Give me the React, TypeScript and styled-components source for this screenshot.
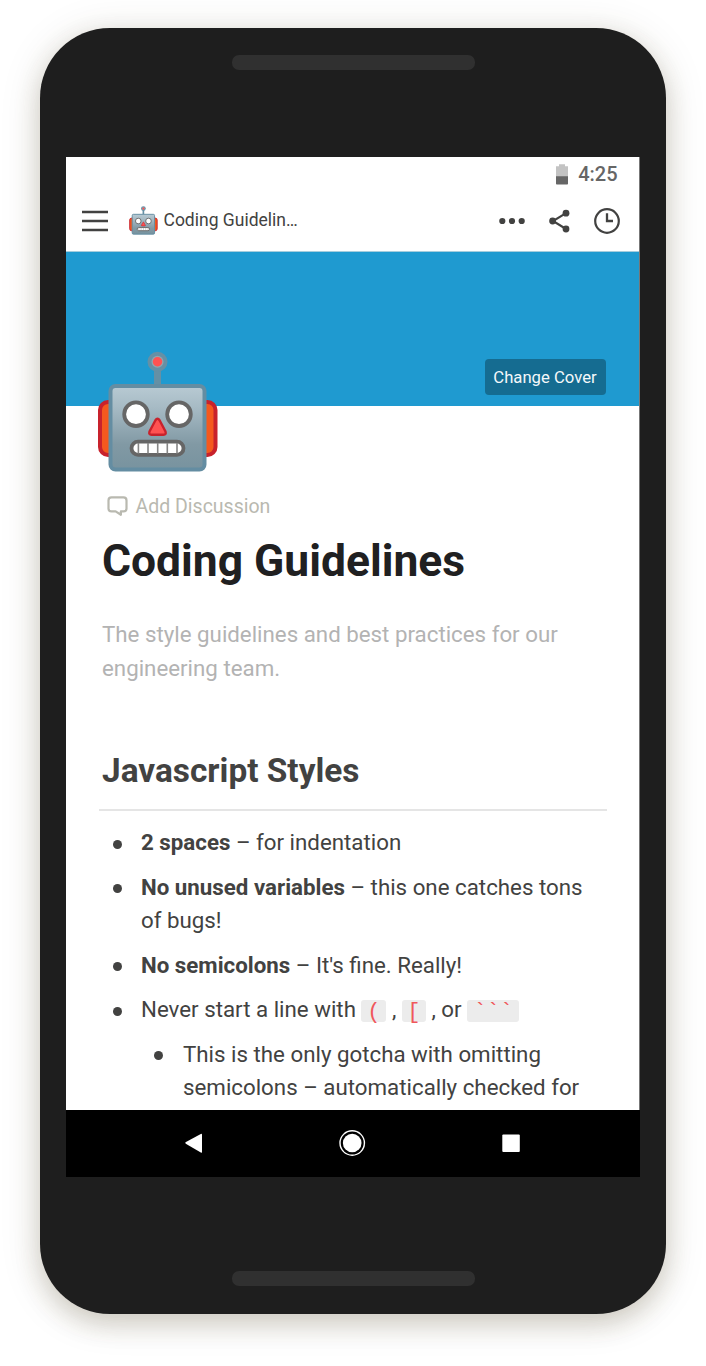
import React from 'react';
import styled, { createGlobalStyle } from 'styled-components';

const GlobalStyle = createGlobalStyle`
  * { box-sizing: border-box; }
  body {
    margin: 0;
    background: #fff;
    font-family: Roboto, "Liberation Sans", sans-serif;
    color: #424241;
  }
  svg { display: block; flex: none; }
`;

const Stage = styled.main`
  height: 1366px;
  padding: 28px 40px 0;
  overflow: hidden;
`;

const Phone = styled.div`
  width: 626px;
  height: 1286px;
  padding: 27px 26px 0;
  border-radius: 70px;
  background: #1e1e1e;
  box-shadow: 0 10px 26px rgba(70, 55, 20, 0.2), 0 4px 42px rgba(70, 60, 30, 0.13);
`;

const Speaker = styled.div`
  width: 243px;
  height: 15px;
  margin-left: 166.4px;
  border-radius: 7px;
  background: #303030;
`;

const Screen = styled.div`
  display: flex;
  flex-direction: column;
  width: 574px;
  height: 1020px;
  margin: 87px 0 94px;
`;

const Surface = styled.div`
  display: flex;
  flex: 1;
  flex-direction: column;
  min-height: 0;
  border-right: 1px solid #777;
  background: #fff;
`;

const StatusBar = styled.div`
  display: flex;
  flex: none;
  align-items: center;
  justify-content: flex-end;
  gap: 10.5px;
  height: 35px;
  padding-right: 21.5px;
`;

const Clock = styled.span`
  color: #666;
  font-size: 20px;
  font-weight: 500;
  line-height: 37px;
`;

const Toolbar = styled.header`
  display: flex;
  flex: none;
  align-items: center;
  height: 59px;
  padding: 0 19px 1px 16px;
`;

const PageName = styled.div`
  display: flex;
  align-items: center;
  gap: 5.5px;
  margin-left: 21px;
  font-size: 17.5px;
  line-height: 58px;
  svg { margin-top: -2px; }
  span { margin-top: -3px; }
`;

const Actions = styled.div`
  display: flex;
  align-items: center;
  gap: 24px;
  margin-left: auto;
`;

const Cover = styled.div`
  display: flex;
  flex: none;
  align-items: flex-end;
  justify-content: flex-end;
  height: 155px;
  padding: 0 33px 11px 0;
  border-top: 1px solid #a6cddd;
  background: #1f9ad0;
`;

const CoverButton = styled.button`
  width: 121px;
  height: 36px;
  padding: 1px 1px 0 0;
  border: 0;
  border-radius: 4px;
  background: #156c91;
  color: #f4f8fa;
  font: 400 16.7px/35px Roboto, sans-serif;
`;

const Article = styled.article`
  padding: 0 32px 0 36px;
`;

const PageIcon = styled.div`
  position: relative;
  width: 122px;
  height: 122px;
  margin: -55px 0 0 -5px;
`;

const Discussion = styled.div`
  display: flex;
  align-items: center;
  gap: 7.5px;
  height: 30px;
  margin: 18px 0 0 5px;
  color: #b9b9b0;
  font-size: 19.5px;
  line-height: 31px;
`;

const Title = styled.h1`
  margin: 11px 0 0;
  color: #202021;
  font-size: 44.4px;
  font-weight: 700;
  line-height: 58px;
`;

const Intro = styled.p`
  margin: 28px 0 0;
  color: #b3b3b3;
  font-size: 22.3px;
  line-height: 33.5px;
`;

const Heading = styled.h2`
  margin: 62px 0 0 -3px;
  padding: 0 0 14px 3px;
  width: 508px;
  border-bottom: 2px solid #e5e5e5;
  font-size: 33.4px;
  font-weight: 700;
  line-height: 48px;
`;

const List = styled.ul<{ $nested?: boolean }>`
  display: flex;
  flex-direction: column;
  gap: 11.1px;
  margin: ${p => (p.$nested ? '11px 0 0' : '15px 0 0')};
  padding: 0;
  list-style: none;
`;

const Item = styled.li<{ $nested?: boolean }>`
  display: flex;
  font-size: 22.3px;
  line-height: 33.5px;
  &::before {
    content: '';
    flex: none;
    width: 9px;
    height: 9px;
    margin: 13.5px ${p => (p.$nested ? 20 : 19.5)}px 0 ${p => (p.$nested ? 13 : 10.5)}px;
    border-radius: 50%;
    background: #424241;
  }
`;

const ItemBody = styled.div`
  white-space: nowrap;
`;

const Code = styled.code<{ $width: number }>`
  display: inline-block;
  width: ${p => p.$width}px;
  height: 22px;
  border-radius: 3px;
  background: #ececec;
  color: #f0575b;
  font: 400 22px/25px "Liberation Mono", monospace;
  text-align: center;
  vertical-align: top;
  margin-top: 7px;
`;

const NavBar = styled.nav`
  display: flex;
  flex: none;
  align-items: center;
  width: 573.5px;
  height: 67px;
  padding: 0 0 1px 119px;
  background: #000;
`;

const Viewport = styled.section`
  flex: 1;
  min-height: 0;
  overflow: hidden;
`;

function Robot({ size, id }: { size: number; id: string }) {
  return (
    <svg width={size} height={size} viewBox="0 0 122 122">
      <defs>
        <linearGradient id={id} x1="0" y1="0" x2="0" y2="1">
          <stop offset="0" stopColor="#b8cad3" />
          <stop offset="0.25" stopColor="#a7bbc5" />
          <stop offset="0.7" stopColor="#8199a4" />
          <stop offset="1" stopColor="#78939f" />
        </linearGradient>
      </defs>
      <rect x="57" y="14" width="7" height="22" fill="#6590a5" />
      <circle cx="60.5" cy="10.8" r="10" fill="#6590a5" />
      <circle cx="60.5" cy="10.8" r="6" fill="#90a4ae" />
      <circle cx="60.5" cy="10.8" r="4.7" fill="#ff5252" />
      <rect x="3" y="51" width="24" height="53" rx="8" fill="#f4591e" stroke="#c8222c" strokeWidth="4" />
      <rect x="94.5" y="51" width="24" height="53" rx="8" fill="#f4591e" stroke="#c8222c" strokeWidth="4" />
      <rect x="13.5" y="35" width="94" height="83.5" rx="5" fill={`url(#${id})`} stroke="#648da2" strokeWidth="4" />
      <circle cx="39" cy="63.2" r="11.8" fill="#fff" stroke="#666" strokeWidth="3.8" />
      <circle cx="82" cy="63.2" r="11.8" fill="#fff" stroke="#666" strokeWidth="3.8" />
      <path d="M58.3 69.5Q60.5 66 62.7 69.5L68.5 80.5Q69.5 83.8 66.5 83.8H54.5Q51.5 83.8 52.5 80.5Z" fill="#ff5252" stroke="#c8222c" strokeWidth="2.4" strokeLinejoin="round" />
      <rect x="34.5" y="90.7" width="52" height="13.2" rx="6.6" fill="#fff" stroke="#666" strokeWidth="3.8" />
      <path d="M41.4 92v10.5M51 92v10.5M60.7 92v10.5M70.3 92v10.5M80 92v10.5" stroke="#858585" strokeWidth="1.6" />
    </svg>
  );
}

const BatteryIcon = () => (
  <svg width="12" height="21" viewBox="0 0 12 21">
    <path d="M0 2.2h3V.2h6v2h3V13H0z" fill="#c3c3c3" />
    <path d="M0 12.2h12v7.5q0 .8-.8.8H.8Q0 20.5 0 19.7z" fill="#666" />
  </svg>
);

const MenuIcon = () => (
  <svg width="26" height="24" viewBox="0 0 26 24">
    <path d="M0 3h26M0 12h26M0 21h26" stroke="#424241" strokeWidth="2.4" />
  </svg>
);

const MoreIcon = () => (
  <svg width="26" height="8" viewBox="0 0 26 8">
    <g fill="#424241">
      <circle cx="3.3" cy="4" r="3.1" />
      <circle cx="13" cy="4" r="3.1" />
      <circle cx="22.7" cy="4" r="3.1" />
    </g>
  </svg>
);

const ShareIcon = () => (
  <svg width="21" height="24" viewBox="0 0 21 24">
    <path d="M17 4.2 4 12l13 8" fill="none" stroke="#424241" strokeWidth="2.1" />
    <g fill="#424241">
      <circle cx="17" cy="4.2" r="3.4" />
      <circle cx="3.6" cy="12" r="3.4" />
      <circle cx="17" cy="20" r="3.4" />
    </g>
  </svg>
);

const HistoryIcon = () => (
  <svg width="26" height="26" viewBox="0 0 26 26">
    <circle cx="13" cy="13" r="11.8" fill="none" stroke="#424241" strokeWidth="2.2" />
    <path d="M13 5.3V13h6" fill="none" stroke="#424241" strokeWidth="2.3" />
  </svg>
);

const CommentIcon = () => (
  <svg width="21" height="20" viewBox="0 0 21 20">
    <path d="M4.5 1.4h12q3 0 3 3v8q0 3-3 3h-2.6v3.4L8.6 15.4H4.5q-3 0-3-3v-8q0-3 3-3z" fill="none" stroke="#b9b9b0" strokeWidth="2.2" strokeLinejoin="round" />
  </svg>
);

const NavIcons = () => (
  <svg width="340" height="30" viewBox="0 0 340 30" fill="#fff">
    <path d="M.5 14.2Q0 15 .8 15.7L15.8 24.6Q17 25.2 17 24V6.8Q17 5.4 15.8 6z" />
    <circle cx="167.2" cy="15" r="12.9" />
    <circle cx="167.2" cy="15" r="11.5" fill="#000" />
    <circle cx="167.2" cy="15" r="9.3" />
    <rect x="317.3" y="6.5" width="17.5" height="17.6" rx="1" />
  </svg>
);

export default function App() {
  return (
    <Stage>
      <GlobalStyle />
      <Phone>
        <Speaker />
        <Screen>
          <Surface>
            <StatusBar>
              <BatteryIcon />
              <Clock>4:25</Clock>
            </StatusBar>
            <Toolbar>
              <MenuIcon />
              <PageName>
                <Robot size={29} id="robot-small" />
                <span>Coding Guidelin…</span>
              </PageName>
              <Actions>
                <MoreIcon />
                <ShareIcon />
                <HistoryIcon />
              </Actions>
            </Toolbar>
            <Viewport>
              <Cover>
                <CoverButton>Change Cover</CoverButton>
              </Cover>
              <Article>
                <PageIcon>
                  <Robot size={122} id="robot-large" />
                </PageIcon>
                <Discussion>
                  <CommentIcon />
                  <span>Add Discussion</span>
                </Discussion>
                <Title>Coding Guidelines</Title>
                <Intro>The style guidelines and best practices for our<br />engineering team.</Intro>
                <Heading>Javascript Styles</Heading>
                <List>
                  <Item><ItemBody><b>2 spaces</b> – for indentation</ItemBody></Item>
                  <Item><ItemBody><b>No unused variables</b> – this one catches tons<br />of bugs!</ItemBody></Item>
                  <Item><ItemBody><b>No semicolons</b> – It's fine. Really!</ItemBody></Item>
                  <Item>
                    <ItemBody>
                      Never start a line with <Code $width={25}>(</Code> , <Code $width={24}>[</Code> , or <Code $width={52}>```</Code>
                      <List $nested>
                        <Item $nested><ItemBody>This is the only gotcha with omitting<br />semicolons – automatically checked for</ItemBody></Item>
                      </List>
                    </ItemBody>
                  </Item>
                </List>
              </Article>
            </Viewport>
          </Surface>
          <NavBar><NavIcons /></NavBar>
        </Screen>
        <Speaker />
      </Phone>
    </Stage>
  );
}
